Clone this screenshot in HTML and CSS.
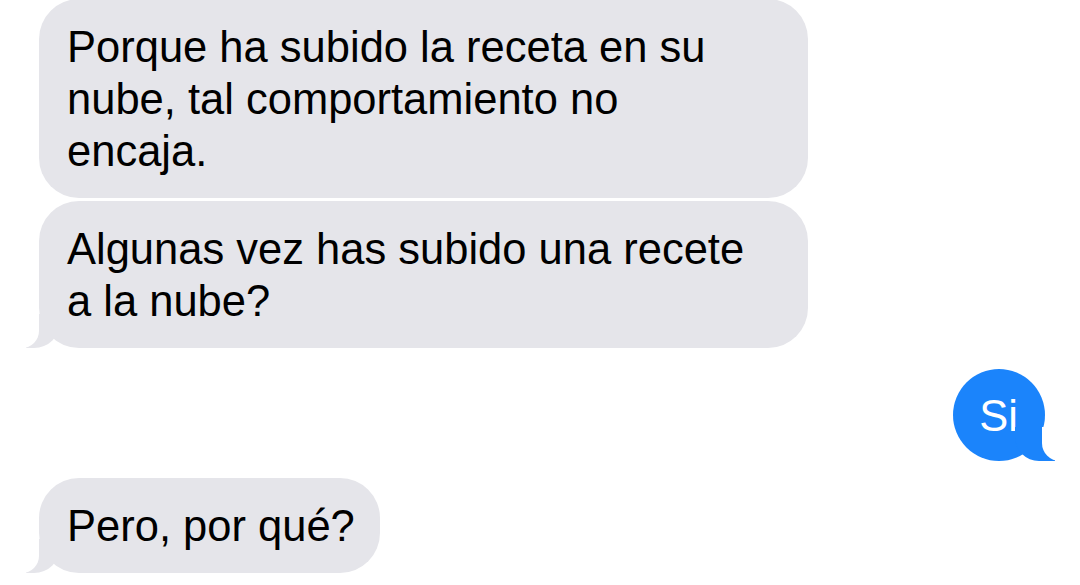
FILE: index.html
```html
<!DOCTYPE html>
<html lang="es">
<head>
  <meta charset="UTF-8" />
  <meta name="viewport" content="width=device-width, initial-scale=1.0"/>
  <title>Mensajes</title>
  <link rel="stylesheet" href="styles.css">
</head>
<body>
  <main class="thread">
    <div class="bubble received wide">Porque ha subido la receta en su nube, tal comportamiento no encaja.</div>
    <div class="bubble received wide tail">Algunas vez has subido una recete a la nube?</div>
    <div class="bubble sent tail">Si</div>
    <div class="bubble received tail">Pero, por qué?</div>
  </main>
</body>
</html>
```

FILE: styles.css
```css
:root {
  --gray: #e5e5ea;
  --blue: #1b84fb;
}

* {
  margin: 0;
  padding: 0;
  box-sizing: border-box;
}

body {
  background: #ffffff;
  font-family: "Liberation Sans", Arial, sans-serif;
  overflow: hidden;
}

.thread {
  display: flex;
  flex-direction: column;
  align-items: flex-start;
  padding: 0 35px 0 39px;
  margin-top: -1px;
}

.bubble {
  position: relative;
  font-size: 43.5px;
  line-height: 52px;
  padding: 22px 25px 21px 28px;
  border-radius: 40px;
  max-width: 769px;
}

.bubble.wide {
  width: 769px;
  padding-right: 51px;
}

.received {
  background: var(--gray);
  color: #000000;
  margin-top: 3px;
}

.received:first-child {
  margin-top: 0;
}

.sent {
  align-self: flex-end;
  background: var(--blue);
  color: #ffffff;
  padding: 21px 27px 19px 26px;
  border-radius: 46px;
  margin-top: 21px;
  margin-bottom: 14px;
}

/* tails */
.tail::before,
.tail::after {
  content: "";
  position: absolute;
  bottom: 0;
}

.received.tail::before {
  left: -13px;
  width: 34px;
  height: 34px;
  background: var(--gray);
  border-bottom-right-radius: 26px;
}

.received.tail::after {
  left: -18px;
  width: 18px;
  height: 34px;
  background: #ffffff;
  border-bottom-right-radius: 17px;
}

.sent.tail::before {
  right: -10px;
  width: 40px;
  height: 34px;
  background: var(--blue);
  border-bottom-left-radius: 24px;
}

.sent.tail::after {
  right: -17px;
  width: 20px;
  height: 34px;
  background: #ffffff;
  border-bottom-left-radius: 18px;
}
```
